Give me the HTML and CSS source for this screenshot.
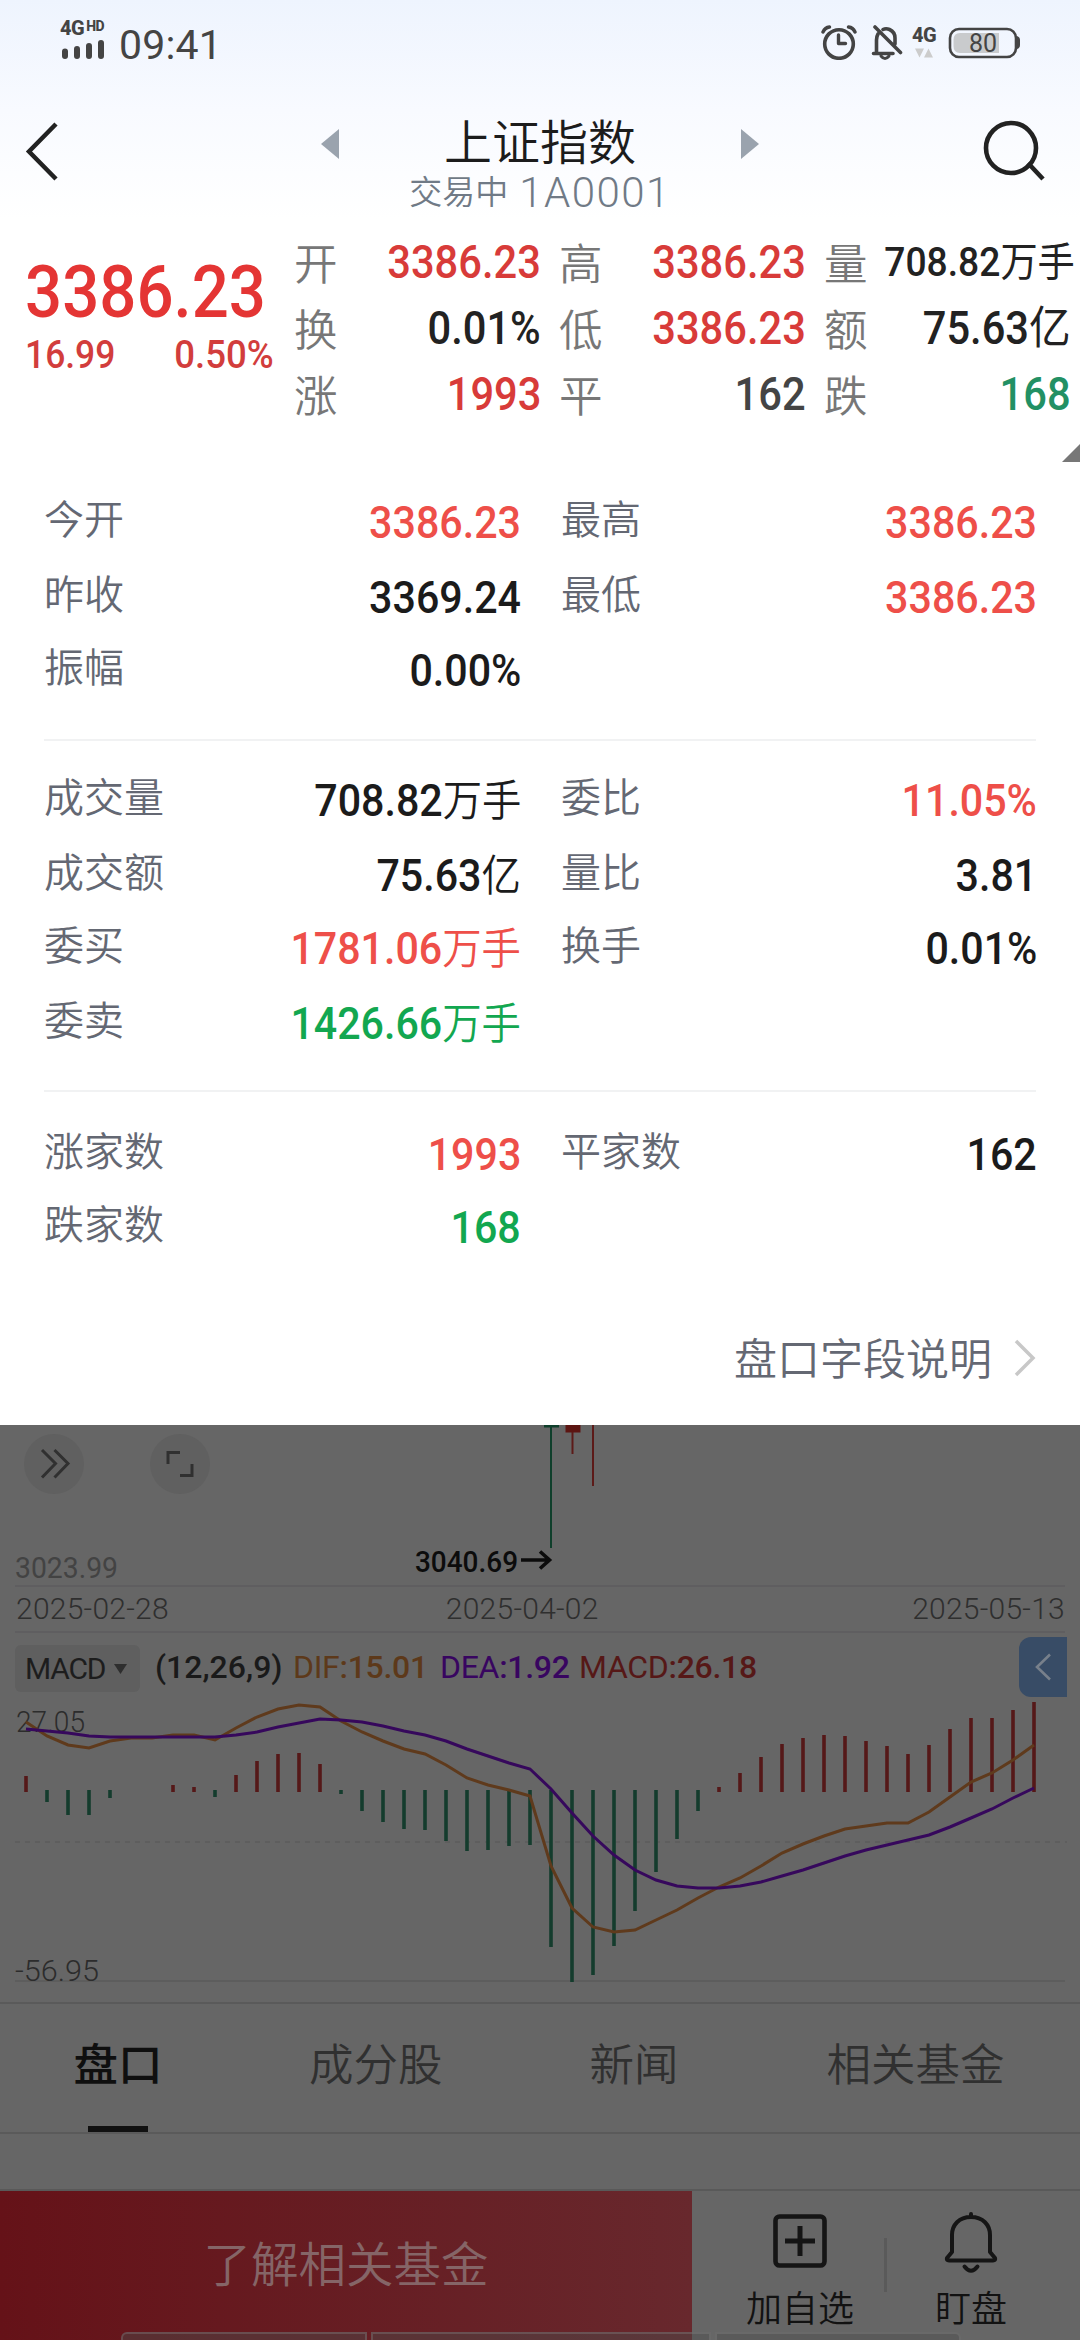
FILE: index.html
```html
<!DOCTYPE html>
<html lang="zh-CN">
<head>
<meta charset="utf-8">
<title>上证指数</title>
<link rel="stylesheet" href="styles.css">
</head>
<body>
<div class="app">
  <section class="sheet">
    <div class="status">
      <div class="signal">
        <div class="net"><b>4G</b><b class="hd">HD</b></div>
        <svg width="44" height="22" viewBox="0 0 44 22"><g stroke="#444" stroke-width="6" stroke-linecap="round"><path d="M4 12.500V17M16 10V17M28 7V17M40 4V17"/></g></svg>
      </div>
      <span class="clock">09:41</span>
      <div class="status-icons">
        <svg width="36" height="36" viewBox="0 0 36 36" fill="none" stroke="#444"><circle cx="18" cy="20" r="14.300" stroke-width="3.600"/><path d="M17.500 11v8.500h7" stroke-width="3.400" stroke-linecap="round" stroke-linejoin="round"/><path d="M2 8Q4 3.500 8.500 3M34 8Q32 3.500 27.500 3" stroke-width="3.400" stroke-linecap="round"/></svg>
        <svg class="mute" width="32" height="36" viewBox="0 0 32 36" fill="none" stroke="#444" stroke-width="3.600" stroke-linecap="round"><path d="M2.500 29.500H22M5.500 29V16Q5.500 12.500 7 10M12 5.500Q15 4 18.500 5.500 24 8 24 14V20M4 3 29.500 28.500"/><path d="M10 32Q14 37 18 32" stroke-width="3"/></svg>
        <div class="data"><b>4G</b><svg width="18" height="10" viewBox="0 0 18 10" fill="#ccc"><path d="M0 0.500H9L4.500 9.500zM9 9.500H18L13.500 .5z"/></svg></div>
        <svg class="battery" width="74" height="34" viewBox="0 0 74 34"><rect x="2" y="3" width="66" height="28" rx="9" fill="none" stroke="#444" stroke-width="2.600"/><path d="M12 7H51V27H12Q5.500 27 5.500 20V14Q5.500 7 12 7z" fill="#c9cbcd"/><path d="M69 10q3 1 3 4v5q0 3-3 4z" fill="#444"/><text x="35" y="25.500" text-anchor="middle" class="bat-text">80</text></svg>
      </div>
    </div>

    <header class="head">
      <svg class="back" width="40" height="70" viewBox="0 0 40 70" fill="none" stroke="#222" stroke-width="4.500"><path d="M31 8 4 35.500 31 63"/></svg>
      <svg class="prev" width="18" height="30" viewBox="0 0 18 30" fill="#9aa3ae"><path d="M18 0V30L0 15z"/></svg>
      <div class="title"><h1>上证指数</h1><p>交易中<span>1A0001</span></p></div>
      <svg class="next" width="18" height="30" viewBox="0 0 18 30" fill="#9aa3ae"><path d="M0 0V30L18 15z"/></svg>
      <svg class="search" width="64" height="64" viewBox="0 0 64 64" fill="none" stroke="#222" stroke-width="4.600"><circle cx="29" cy="29" r="25"/><path d="M46 44 61 60"/></svg>
    </header>

    <div class="quote">
      <div class="price">
        <div class="last"><span class="num">3386.23</span></div>
        <div class="change"><span class="num">16.99</span><span class="num r">0.50%</span></div>
      </div>
      <div class="grid">
        <div class="cell"><label>开</label><span class="num r red">3386.23</span></div>
        <div class="cell"><label>高</label><span class="num r red">3386.23</span></div>
        <div class="cell"><label>量</label><span class="num r small">708.82<i>万手</i></span></div>
        <div class="cell"><label>换</label><span class="num r">0.01%</span></div>
        <div class="cell"><label>低</label><span class="num r red">3386.23</span></div>
        <div class="cell"><label>额</label><span class="num r">75.63<i>亿</i></span></div>
        <div class="cell"><label>涨</label><span class="num r red">1993</span></div>
        <div class="cell"><label>平</label><span class="num r dim">162</span></div>
        <div class="cell"><label>跌</label><span class="num r green">168</span></div>
      </div>
      <svg class="corner" width="18" height="18" viewBox="0 0 18 18"><path d="M18 0V18H0z" fill="#777"/></svg>
    </div>

    <div class="detail">
      <div class="group g1">
        <div class="row"><label>今开</label><span class="num r up">3386.23</span></div>
        <div class="row"><label>最高</label><span class="num r up">3386.23</span></div>
        <div class="row"><label>昨收</label><span class="num r">3369.24</span></div>
        <div class="row"><label>最低</label><span class="num r up">3386.23</span></div>
        <div class="row"><label>振幅</label><span class="num r">0.00%</span></div>
      </div>
      <div class="group g2">
        <div class="row"><label>成交量</label><span class="num r">708.82<i>万手</i></span></div>
        <div class="row"><label>委比</label><span class="num r up">11.05%</span></div>
        <div class="row"><label>成交额</label><span class="num r">75.63<i>亿</i></span></div>
        <div class="row"><label>量比</label><span class="num r">3.81</span></div>
        <div class="row"><label>委买</label><span class="num r up">1781.06<i>万手</i></span></div>
        <div class="row"><label>换手</label><span class="num r">0.01%</span></div>
        <div class="row"><label>委卖</label><span class="num r down">1426.66<i>万手</i></span></div>
      </div>
      <div class="group g3">
        <div class="row"><label>涨家数</label><span class="num r up">1993</span></div>
        <div class="row"><label>平家数</label><span class="num r">162</span></div>
        <div class="row"><label>跌家数</label><span class="num r down">168</span></div>
      </div>
      <div class="more">盘口字段说明<svg width="22" height="38" viewBox="0 0 22 38" fill="none" stroke="#c8c8c8" stroke-width="3.500"><path d="M2 2 19 19 2 36"/></svg></div>
    </div>
  </section>

  <section class="chart">
    <svg class="kline" width="1080" height="160" viewBox="0 1425 1080 160">
      <path d="M544 1425H559V1427.500H544zM550 1425h2v123h-2z" fill="#0f3f2b"/>
      <path d="M565.500 1425H580.500V1432.500H565.500z" fill="#5c1512"/><path d="M571.500 1432h2v22h-2zM592 1425h2v61h-2z" fill="#5c1a18"/>
      <g fill="#606060"><circle cx="54" cy="1464" r="30"/><circle cx="180" cy="1464" r="30"/></g>
      <g fill="none" stroke="#303030" stroke-width="3"><path d="M42 1450 55.500 1463.500 42 1477.500M54.500 1450 68 1463.500 54.500 1477.500"/><path d="M168 1464V1452.500H180M192 1464V1475.500H180"/></g>
      <text x="15" y="1578" class="ax" fill="#434343" textLength="103" lengthAdjust="spacingAndGlyphs">3023.99</text>
      <text x="415" y="1572" class="ax mid" fill="#0c0c0c" textLength="103" lengthAdjust="spacingAndGlyphs">3040.69</text>
      <path d="M521 1560H549M540 1551.500 549.500 1560 540 1568.500" fill="none" stroke="#0c0c0c" stroke-width="3.600"/>
    </svg>
    <div class="dates"><span>2025-02-28</span><span>2025-04-02</span><span>2025-05-13</span></div>
    <div class="tools">
      <div class="pick"><span>MACD</span><svg width="13" height="10" viewBox="0 0 13 10"><path d="M0 0H13L6.500 10z" fill="#2e2e2e"/></svg></div>
      <span class="param">(12,26,9)</span>
      <span class="dif">DIF<b>:15.01</b></span>
      <span class="dea">DEA<b>:1.92</b></span>
      <span class="macd">MACD<b>:26.18</b></span>
      <div class="fold"><svg width="18" height="30" viewBox="0 0 18 30" fill="none" stroke="#78808b" stroke-width="2.600"><path d="M16 2.500 3 15 16 27.500"/></svg></div>
    </div>
    <svg class="plot" width="1080" height="302" viewBox="0 1700 1080 302" fill="none">
      <path d="M15 1981H1065" stroke="#5d5d5d" stroke-width="2"/>
      <path d="M15 1842H1067" stroke="#5e5e5e" stroke-width="2" stroke-dasharray="5 5"/>
      <text x="16" y="1731.500" class="ax thin" fill="#2c2c2c" textLength="69" lengthAdjust="spacingAndGlyphs">27.05</text>
      <text x="15" y="1981" class="ax thin" fill="#2c2c2c" textLength="84" lengthAdjust="spacingAndGlyphs">-56.95</text>
      <path stroke="#551818" stroke-width="3.600" d="M26 1792V1776M173 1792V1785M194 1792V1787M236 1792V1775M257 1792V1761M278 1792V1754M299 1792V1753M320 1792V1764M719 1792V1787M740 1792V1773M761 1792V1757M782 1792V1744M803 1792V1738M824 1792V1735M845 1792V1736M866 1792V1741M887 1792V1746M908 1792V1754M929 1792V1745M950 1792V1729M971 1792V1718M992 1792V1718M1013 1792V1710M1034 1792V1702"/>
      <path stroke="#143c2d" stroke-width="3.600" d="M47 1790V1802M68 1790V1815M89 1790V1815M110 1790V1798M215 1790V1797M341 1790V1794M362 1790V1811M383 1790V1822M404 1790V1829M425 1790V1830M446 1790V1841M467 1790V1851M488 1790V1850M509 1790V1846M530 1790V1845M551 1790V1947M572 1790V1982M593 1790V1975M614 1790V1946M635 1790V1911M656 1790V1872M677 1790V1839M698 1790V1811"/>
      <polyline stroke="#5f3a1c" stroke-width="3" points="26,1722 47,1736 68,1745 89,1748 110,1741 131,1738 152,1738 173,1735 194,1735 215,1740 236,1728 257,1717 278,1709 299,1705 320,1707 341,1721 362,1732 383,1741 404,1749 425,1754 446,1765 467,1778 488,1785 509,1790 530,1796 551,1866 572,1908 593,1927 614,1932 635,1930 656,1920 677,1910 698,1898 719,1887 740,1878 761,1866 782,1853 803,1844 824,1836 845,1829 866,1826 887,1823 908,1823 929,1812 950,1797 971,1782 992,1773 1013,1760 1034,1745"/>
      <polyline stroke="#36085c" stroke-width="3" points="26,1729 47,1731 68,1733 89,1736 110,1737 131,1737 152,1737 173,1737 194,1737 215,1737 236,1735 257,1732 278,1727 299,1723 320,1719 341,1720 362,1722 383,1726 404,1731 425,1735 446,1741 467,1749 488,1756 509,1763 530,1769 551,1789 572,1813 593,1836 614,1855 635,1870 656,1880 677,1886 698,1888 719,1888 740,1886 761,1882 782,1876 803,1870 824,1863 845,1856 866,1850 887,1845 908,1840 929,1835 950,1827 971,1818 992,1809 1013,1798 1034,1788"/>
    </svg>
  </section>

  <nav class="tabs">
    <a class="on">盘口</a><a>成分股</a><a>新闻</a><a>相关基金</a>
  </nav>

  <footer class="bottom">
    <div class="fund">了解相关基金</div>
    <div class="act add">
      <svg width="54" height="62" viewBox="0 0 54 62" fill="none" stroke="#151515"><rect x="2.500" y="5.500" width="49" height="49" rx="4" stroke-width="4.600"/><path d="M12 30H42M27 15V45" stroke-width="5"/></svg>
      <span>加自选</span>
    </div>
    <div class="sep"></div>
    <div class="act">
      <svg width="54" height="62" viewBox="0 0 54 62" fill="none" stroke="#151515" stroke-width="4" stroke-linecap="round" stroke-linejoin="round"><path d="M27 3V6M27 6C15 6 8 14 8 24V41L3 47Q2 49.500 5 49.500H49Q52 49.500 51 47L46 41V24C46 14 39 6 27 6z"/><path d="M20.500 55.500Q27 64 33.500 55.500"/></svg>
      <span>盯盘</span>
    </div>
    <div class="peek"><i></i><i></i><i></i></div>
  </footer>
</div>
</body>
</html>
```
FILE: styles.css
```css
* { box-sizing: border-box; margin: 0; padding: 0; }
body { width: 1080px; height: 2340px; overflow: hidden; background: #666; font-family: Roboto, "Noto Sans CJK SC", sans-serif; }
i { font-style: normal; }
svg { display: block; flex: none; }
.app { width: 1080px; height: 2340px; display: flex; flex-direction: column; }
.sheet { height: 1425px; flex: none; background: linear-gradient(#eef4fe, #f8faff 110px, #fff 220px); }

.status { height: 84px; display: flex; padding: 0 78px 0 59px; align-items: flex-start; color: #444; }
.signal { width: 60px; padding-top: 20px; }
.net { display: flex; align-items: flex-start; height: 17px; line-height: 17px; font-size: 20px; letter-spacing: -.5px; margin-left: 1px; }
.net b { font-weight: 800; }
.net .hd { font-size: 14px; line-height: 12px; margin-left: 2px; }
.signal svg { margin: 2px 0 0 2px; }
.clock { font-size: 41px; line-height: 46px; margin-top: 22px; letter-spacing: .2px; }
.status-icons { margin-left: auto; display: flex; padding-top: 24px; }
.mute { margin-left: 14px; }
.data { margin-left: 9px; width: 26px; }
.data b { display: block; font-size: 20px; line-height: 22px; font-weight: 800; letter-spacing: -.6px; }
.data svg { margin: 2px 0 0 3px; }
.battery { margin: 2px -20px 0 10px; }
.bat-text { font-size: 25px; fill: #444; }

.head { height: 146px; display: flex; }
.back { margin: 32px 0 0 25px; }
.prev { margin: 45px 0 0 256px; }
.title { width: 402px; text-align: center; padding-top: 25px; }
h1 { font-size: 48px; line-height: 70px; height: 70px; font-weight: 350; color: #1c1c1c; }
.title p { display: flex; justify-content: center; gap: 11px; font-size: 33px; line-height: 46px; height: 46px; margin-top: -9px; color: #707a86; font-weight: 350; }
.title span { font-size: 42px; letter-spacing: 1.500px; }
.next { margin: 45px 0 0; }
.search { margin: 35px 0 0 223px; }

.num { display: inline-block; font-weight: 500; transform: scaleX(.92); transform-origin: 0 50%; white-space: nowrap; }
.num.r { transform: translateX(2px) scaleX(.915); transform-origin: 100% 50%; }
.num i { font-weight: 400; }
.red { color: #d83b39; }
.green { color: #229064; }
.dim { color: #444; }
.up { color: #ee4f49; }
.down { color: #12a750; }

.quote { height: 250px; display: flex; position: relative; color: #222; }
.price { width: 272px; padding: 22px 0 0 25px; color: #e43534; }
.last { font-size: 73px; line-height: 80px; height: 80px; }
.last .num { transform: scaleX(.895); }
.change { display: flex; justify-content: space-between; color: #d23d3c; font-size: 38.500px; line-height: 46px; }
.change .r { transform: translateX(2px) scaleX(.95); }
.grid { display: grid; grid-template-columns: 245px 245px 245px; grid-template-rows: repeat(3, 66px); column-gap: 20px; margin-left: 22px; height: 198px; }
.grid .cell { display: flex; justify-content: space-between; align-items: flex-start; line-height: 66px; font-size: 45.500px; white-space: nowrap; }
.cell label { font-size: 43.500px; color: #777; font-weight: 350; margin-top: 3px; }
.cell .small { font-size: 40px; transform: translateX(2px) scaleX(.93); }
.corner { position: absolute; right: 0; bottom: 18px; }

.detail { padding: 0 44px; color: #1b1b1b; }
.group { display: grid; grid-template-columns: 475px 474px; column-gap: 42px; grid-template-rows: 75px 73px 75px; }
.g1 { padding-top: 6px; height: 261px; border-bottom: 2px solid #f1f2f3; }
.g2 { padding-top: 23px; height: 351px; border-bottom: 2px solid #f1f2f3; }
.g3 { padding-top: 26px; height: 190px; grid-template-rows: 73px 73px; }
.row { display: flex; justify-content: space-between; line-height: 74px; font-size: 45px; }
.row label { font-size: 40px; color: #646873; font-weight: 350; margin-top: -2px; }
.row i { font-size: 43px; font-weight: 350; }
.more { display: flex; justify-content: flex-end; align-items: center; gap: 22px; height: 148px; font-size: 43px; color: #646873; font-weight: 350; }
.more svg { margin-top: 4px; }

.chart { height: 577px; flex: none; }
.kline { height: 160px; }
.ax { font-family: Roboto, sans-serif; font-size: 30px; font-weight: 400; }
.mid { font-weight: 500; }
.thin { font-weight: 300; }
.dates { height: 48px; margin: 0 15px; padding: 0 0 0 1px; border-top: 2px solid #5f5e60; border-bottom: 2px solid #5f5e60; display: flex; font-size: 30px; line-height: 43px; color: #2f2f2f; font-weight: 300; letter-spacing: .25px; }
.dates span:nth-child(2) { margin: 0 auto 0 277px; }
.tools { height: 67px; padding: 4px 13px 0 15px; display: flex; align-items: flex-start; font-size: 32px; line-height: 60px; white-space: nowrap; }
.pick { width: 125px; height: 47px; margin-top: 8px; background: #5f5f5f; border-radius: 6px; display: flex; align-items: center; gap: 9px; padding-left: 10px; color: #1d1d1d; font-size: 30px; line-height: 46px; }
.pick span { letter-spacing: -1.200px; }
.param { width: 138px; margin-left: 15px; color: #1a1a1a; font-weight: 500; }
.dif { width: 147px; color: #5d391a; letter-spacing: -.3px; }
.dea { width: 139px; color: #380560; letter-spacing: -.3px; }
.macd { color: #561817; letter-spacing: -.3px; }
.tools b { font-weight: 500; }
.fold { width: 48px; height: 60px; margin-left: auto; background: #384c66; border-radius: 12px 0 0 12px; display: flex; align-items: center; justify-content: center; }

.tabs { height: 132px; flex: none; border-top: 2px solid #5a5a5a; border-bottom: 2px solid #5a5a5a; display: flex; font-size: 44.500px; line-height: 125px; font-weight: 350; color: #303030; }
.tabs a { flex: none; height: 128px; white-space: nowrap; text-align: center; }
.tabs a:nth-child(1) { width: 60px; margin-left: 88px; display: flex; justify-content: center; color: #0f0f0f; font-weight: 500; border-bottom: 6px solid #111; }
.tabs a:nth-child(2) { margin-left: 161px; }
.tabs a:nth-child(3) { margin-left: 147px; }
.tabs a:nth-child(4) { margin-left: 148px; }

.bottom { height: 151px; flex: none; margin-top: auto; border-top: 2px solid #595959; display: flex; position: relative; overflow: hidden; color: #121212; }
.fund { width: 692px; background: linear-gradient(90deg, #651218, #68282d); color: #856567; font-size: 47.500px; line-height: 150px; text-align: center; font-weight: 350; }
.act { display: flex; flex-direction: column; align-items: center; width: 168px; padding-top: 20px; font-size: 36px; line-height: 52px; font-weight: 350; }
.act span { margin-top: 11px; }
.add { width: 192px; padding-left: 24px; }
.sep { width: 3px; height: 54px; background: #5a5a5a; margin-top: 47px; }
.peek { position: absolute; left: 121px; top: 141px; display: flex; gap: 4px; }
.peek i { height: 30px; width: 246px; background: rgba(75, 75, 75, .45); border: 2px solid rgba(135, 135, 135, .35); border-radius: 6px 0 0 0; }
.peek i:nth-child(2) { width: 340px; border-radius: 0; }
.peek i:nth-child(3) { border-radius: 0 6px 0 0; }
```
